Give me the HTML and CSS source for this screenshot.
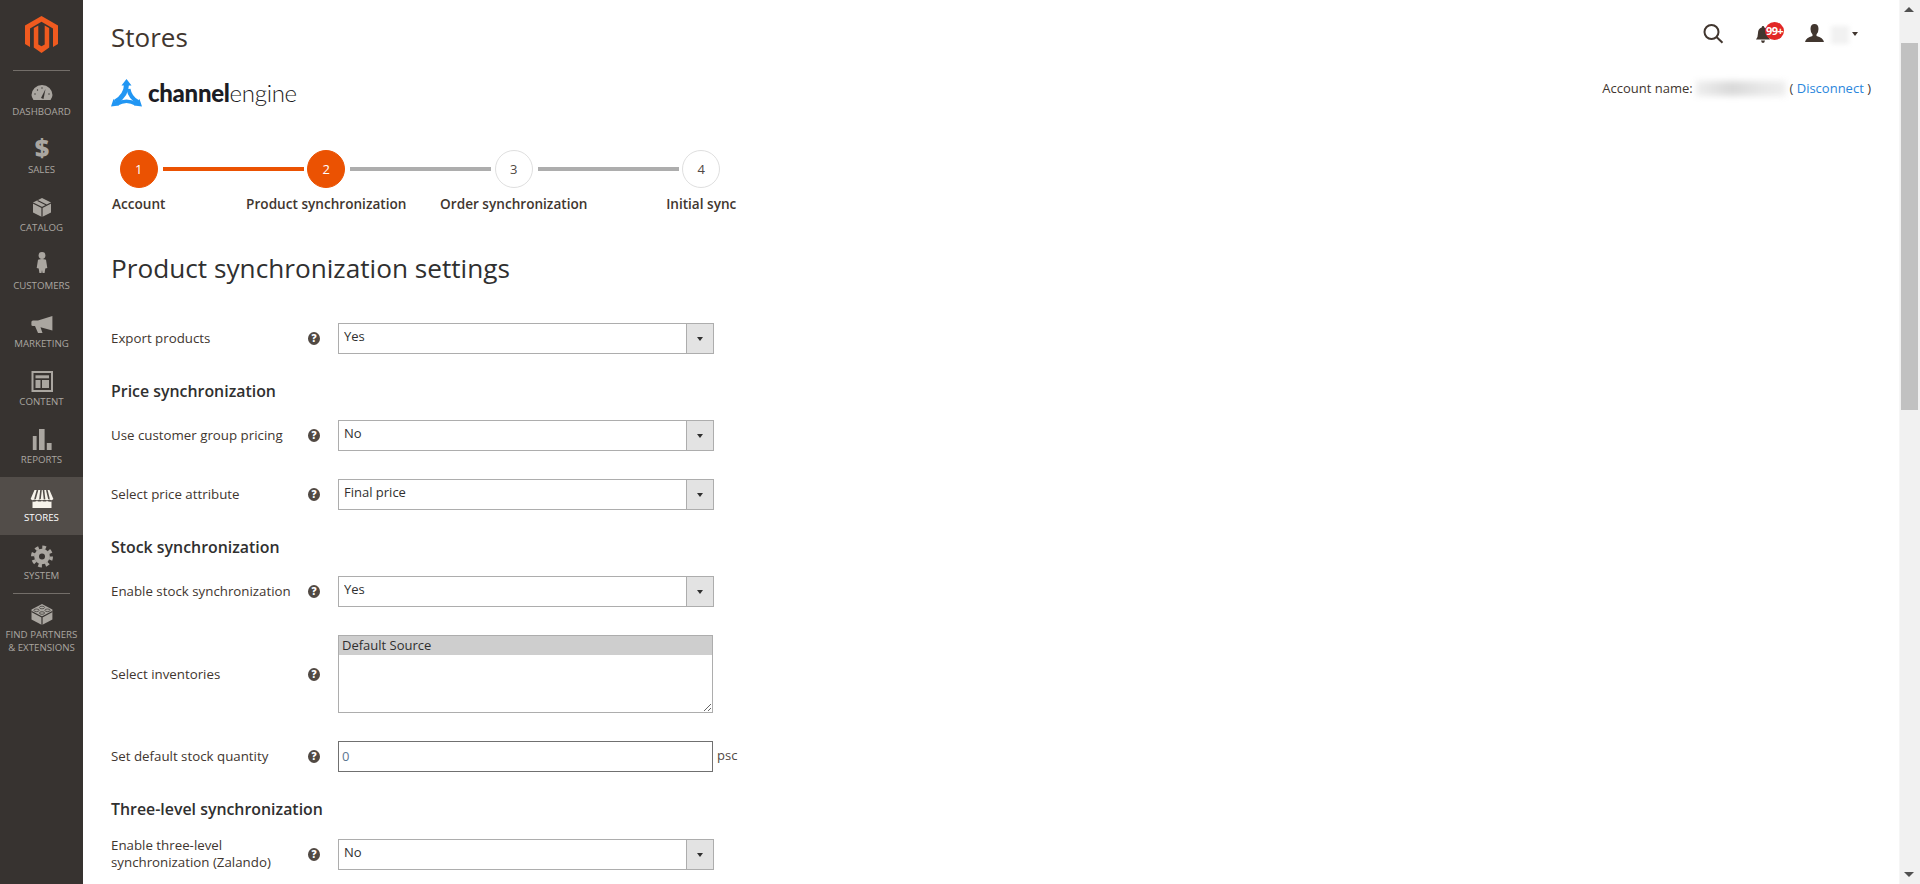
FILE: index.html
```html
<!DOCTYPE html>
<html lang="en">
<head>
    <meta charset="UTF-8">
    <title>Stores</title>
    <link rel="stylesheet" href="styles.css">
</head>
<body>
    <nav class="sidebar">
        <div class="sidebar-logo">
            <svg width="33" height="37" viewBox="0 0 33 37" fill="#ef5a1f">
                <path d="M16.5 0 L33 9.5 V28 L28 31 V12.5 L16.5 5.8 L5 12.5 V31 L0 28 V9.5 Z"/>
                <path d="M8.8 12 L13.3 9.4 V28.5 L16.5 30.2 L19.7 28.5 V9.4 L24.2 12 V31.5 L16.5 37 L8.8 31.5 Z"/>
            </svg>
        </div>
        <a class="nav-item">
            <svg class="nav-icon" viewBox="0 0 28 28">
                <path d="M5.5 23 Q3.5 20 3.5 18 A10.5 10 0 0 1 24.5 18 Q24.5 20 22.5 23 Z"/>
                <path class="cut" d="M13 21 L17.5 12 L15.5 22 Z"/>
                <g class="cut"><circle cx="7" cy="17" r=".7"/><circle cx="9.5" cy="13" r=".7"/><circle cx="14" cy="11" r=".7"/><circle cx="21" cy="17" r=".7"/></g>
            </svg>
            <span>Dashboard</span>
        </a>
        <a class="nav-item">
            <svg class="nav-icon" viewBox="0 0 28 28"><text x="14" y="22" text-anchor="middle" class="dollar">$</text></svg>
            <span>Sales</span>
        </a>
        <a class="nav-item">
            <svg class="nav-icon" viewBox="0 0 28 28">
                <path d="M14 5 L23 9.5 V19.5 L14 24 L5 19.5 V9.5 Z"/>
                <path class="cut-line" d="M5 10 L14 14.5 L23 10 M14 14.5 V24 M9.5 7.5 L18.5 12"/>
            </svg>
            <span>Catalog</span>
        </a>
        <a class="nav-item">
            <svg class="nav-icon" viewBox="0 0 28 28">
                <circle cx="14" cy="4.5" r="3.4"/>
                <path d="M10 8.8 Q14 7.4 18 8.8 L19.3 17 L17.3 17.5 L16.6 22 H14.5 L14 19 L13.5 22 H11.4 L10.7 17.5 L8.7 17 Z"/>
            </svg>
            <span>Customers</span>
        </a>
        <a class="nav-item">
            <svg class="nav-icon" viewBox="0 0 28 28">
                <path d="M24.4 7 L10 11.5 H5 Q3.4 11.5 3.4 13 V16 Q3.4 17 5 17 H7 L10 24 H14.5 L12.5 18.3 L24.4 21.5 Z"/>
            </svg>
            <span>Marketing</span>
        </a>
        <a class="nav-item">
            <svg class="nav-icon" viewBox="0 0 28 28">
                <rect class="frame" x="4.5" y="5" width="19.5" height="19"/>
                <rect x="7.5" y="8.3" width="13.5" height="3"/>
                <rect x="7.5" y="13" width="5" height="8"/>
                <rect x="14" y="13" width="7" height="8"/>
            </svg>
            <span>Content</span>
        </a>
        <a class="nav-item">
            <svg class="nav-icon" viewBox="0 0 28 28">
                <rect x="4.8" y="11" width="3.8" height="14"/>
                <rect x="11" y="4" width="5.6" height="21"/>
                <rect x="18.8" y="18" width="4.8" height="7"/>
            </svg>
            <span>Reports</span>
        </a>
        <a class="nav-item active">
            <svg class="nav-icon" viewBox="0 0 28 28">
                <path d="M6.5 7 H21.5 L25.4 16 Q24 18 21.5 16.5 Q19 18 16.5 16.5 Q14 18 11.5 16.5 Q9 18 6.5 16.5 Q4 18 2.6 16 Z"/>
                <path class="stripe" d="M9.5 7 L7 16 M13 7 L12 16 M15.5 7 L16.5 16 M18.8 7 L21 16"/>
                <path d="M4.5 18.5 Q6.5 19 9 18 Q11.5 19 14 18 Q16.5 19 19 18 Q21.5 19 23.5 18.5 V25 H4.5 Z"/>
            </svg>
            <span>Stores</span>
        </a>
        <a class="nav-item">
            <svg class="nav-icon" viewBox="0 0 28 28">
                <circle class="teeth" cx="14" cy="15.5" r="9.2"/>
                <circle cx="14" cy="15.5" r="7.8"/>
                <circle class="cut" cx="14" cy="15.5" r="3"/>
            </svg>
            <span>System</span>
        </a>
        <a class="nav-item nav-item-split">
            <svg class="nav-icon" viewBox="0 0 28 28">
                <path d="M14 4 L24.4 9.5 V19.5 L14 25 L3.5 19.5 V9.5 Z"/>
                <path class="cut-line" d="M3.5 11.5 L14 17 L24.4 11.5 M14 17 V25"/>
                <g class="cut-line thin"><ellipse cx="14" cy="7.5" rx="2.6" ry="1.3"/><ellipse cx="8.5" cy="10.3" rx="2.6" ry="1.3"/><ellipse cx="19.5" cy="10.3" rx="2.6" ry="1.3"/><ellipse cx="14" cy="13" rx="2.6" ry="1.3"/></g>
            </svg>
            <span>Find Partners<br>&amp; Extensions</span>
        </a>
    </nav>

    <main class="main">
        <header class="page-header">
            <h1>Stores</h1>
            <div class="actions">
                <svg class="search-icon" width="22" height="20" viewBox="0 0 22 20">
                    <circle cx="8.5" cy="8" r="7"/>
                    <path d="M13.5 13 L19.5 18.8"/>
                </svg>
                <div class="bell">
                    <svg width="14" height="17" viewBox="0 0 14 17">
                        <path d="M7 0 Q8.3 0 8.3 1.4 Q12 2.5 12 7 Q12 11 14 13.5 H0 Q2 11 2 7 Q2 2.5 5.7 1.4 Q5.7 0 7 0 Z M5 14.5 H9 Q8.5 17 7 17 Q5.5 17 5 14.5 Z"/>
                    </svg>
                    <span class="badge">99+</span>
                </div>
                <svg class="user-icon" width="19" height="18" viewBox="0 0 19 18">
                    <path d="M9.5 0 Q13.5 0 13.5 5 Q13.5 8.5 11.5 10.5 V12 Q18 13.5 19 18 H0 Q1 13.5 7.5 12 V10.5 Q5.5 8.5 5.5 5 Q5.5 0 9.5 0 Z"/>
                </svg>
                <div class="user-blur"></div>
                <div class="caret"></div>
            </div>
        </header>

        <div class="brand-row">
            <div class="brand">
                <svg width="31" height="28" viewBox="0 0 31 28">
                    <g fill="none" stroke="#2196f3">
                        <path stroke-width="5" d="M15.5 5 C15.5 13 11 19 4.5 23"/>
                        <path stroke-width="4" d="M17.5 10 C18.5 16 21.5 20 27 23"/>
                        <path stroke-width="3.5" d="M6 25 C12 21.5 19 21.5 25 25"/>
                    </g>
                    <path fill="#2196f3" d="M15.5 0 L20.5 6.5 H10.5 Z M0 27.5 L2.5 20 L8 26.5 Z M31 27.5 L28.5 20 L23 26.5 Z"/>
                </svg>
                <span class="brand-name"><b>channel</b>engine</span>
            </div>
            <div class="account">Account name: <span class="account-blur"></span> ( <a class="link">Disconnect</a> )</div>
        </div>

        <ol class="stepper">
            <li class="step done"><span class="step-dot">1</span><span class="step-label">Account</span></li>
            <li class="step current"><span class="step-dot">2</span><span class="step-label">Product synchronization</span></li>
            <li class="step"><span class="step-dot">3</span><span class="step-label">Order synchronization</span></li>
            <li class="step"><span class="step-dot">4</span><span class="step-label">Initial sync</span></li>
        </ol>

        <h2 class="settings-title">Product synchronization settings</h2>

        <form class="settings">
            <div class="field first">
                <label class="field-label">Export products</label>
                <span class="help">?</span>
                <div class="select-wrap"><select><option>Yes</option><option>No</option></select></div>
            </div>

            <h3 class="section-title">Price synchronization</h3>
            <div class="field under-title">
                <label class="field-label">Use customer group pricing</label>
                <span class="help">?</span>
                <div class="select-wrap"><select><option>No</option><option>Yes</option></select></div>
            </div>
            <div class="field">
                <label class="field-label">Select price attribute</label>
                <span class="help">?</span>
                <div class="select-wrap"><select><option>Final price</option></select></div>
            </div>

            <h3 class="section-title">Stock synchronization</h3>
            <div class="field under-title">
                <label class="field-label">Enable stock synchronization</label>
                <span class="help">?</span>
                <div class="select-wrap"><select><option>Yes</option><option>No</option></select></div>
            </div>
            <div class="field">
                <label class="field-label">Select inventories</label>
                <span class="help">?</span>
                <select class="multi" multiple size="4"><option selected>Default Source</option></select>
            </div>
            <div class="field">
                <label class="field-label">Set default stock quantity</label>
                <span class="help">?</span>
                <input class="qty" type="text" value="0">
                <span class="unit">psc</span>
            </div>

            <h3 class="section-title">Three-level synchronization</h3>
            <div class="field under-title">
                <label class="field-label">Enable three-level synchronization (Zalando)</label>
                <span class="help">?</span>
                <div class="select-wrap"><select><option>No</option><option>Yes</option></select></div>
            </div>
        </form>
    </main>

    <div class="scrollbar">
        <span class="scroll-up"></span>
        <span class="scroll-thumb"></span>
        <span class="scroll-down"></span>
    </div>
</body>
</html>
```

FILE: styles.css
```css
* {
    margin: 0;
    padding: 0;
    box-sizing: border-box;
}

body {
    font-family: 'Open Sans', 'Noto Sans', sans-serif;
    font-size: 13px;
    color: #303030;
    background: #fff;
    height: 884px;
    overflow: hidden;
    display: flex;
}

/* sidebar */
.sidebar {
    width: 83px;
    flex: none;
    background: #373330;
    display: flex;
    flex-direction: column;
    align-items: stretch;
}

.sidebar-logo {
    height: 71px;
    padding-top: 16px;
    display: flex;
    justify-content: center;
    position: relative;
}

.sidebar-logo::after,
.nav-item-split::before {
    content: "";
    position: absolute;
    left: 13px;
    right: 13px;
    height: 1px;
    background: #736e69;
}

.sidebar-logo::after {
    bottom: 0;
}

.nav-item {
    height: 58px;
    padding-top: 6px;
    display: flex;
    flex-direction: column;
    align-items: center;
    color: #aaa6a0;
    fill: #aaa6a0;
    font-size: 9.7px;
    line-height: 13px;
    text-transform: uppercase;
    text-align: center;
    position: relative;
}

.nav-item.active {
    background: #524d49;
    color: #fff;
    fill: #f7f3eb;
}

.nav-item-split {
    height: 70px;
    margin-top: 1px;
}

.nav-item-split::before {
    top: -1px;
}

.nav-icon {
    width: 28px;
    height: 28px;
    display: block;
    flex: none;
    overflow: visible;
}

.nav-icon .cut {
    fill: #373330;
}

.nav-icon .cut-line {
    fill: none;
    stroke: #373330;
    stroke-width: 1.2;
}

.nav-icon .cut-line.thin {
    stroke-width: .7;
}

.nav-icon .stripe {
    fill: none;
    stroke: #524d49;
    stroke-width: 1.6;
}

.nav-icon .frame {
    fill: none;
    stroke: #aaa6a0;
    stroke-width: 2;
}

.nav-icon .teeth {
    fill: none;
    stroke: #aaa6a0;
    stroke-width: 3.6;
    stroke-dasharray: 3.6 3.63;
}

.nav-icon .dollar {
    font-family: 'Open Sans', sans-serif;
    font-weight: 800;
    font-size: 25px;
}

/* main */
.main {
    flex: 1;
    min-width: 0;
    padding: 0 28px 0 28px;
    overflow: hidden;
}

.page-header {
    height: 79px;
    display: flex;
    justify-content: space-between;
    align-items: flex-start;
}

.page-header h1 {
    font-size: 26px;
    font-weight: 400;
    line-height: 38px;
    margin-top: 18px;
    color: #41362f;
}

.actions {
    display: flex;
    align-items: center;
    height: 20px;
    margin-top: 23px;
    margin-right: 13px;
}

.search-icon {
    fill: none;
    stroke: #41362f;
    stroke-width: 2;
    margin-top: 2px;
}

.bell {
    position: relative;
    width: 14px;
    height: 17px;
    margin-left: 31px;
    margin-top: 3px;
    fill: #41362f;
}

.badge {
    position: absolute;
    left: 9px;
    top: -4px;
    width: 19px;
    height: 18px;
    border-radius: 50%;
    background: #e22626;
    color: #fff;
    font-size: 11px;
    font-weight: 700;
    line-height: 18px;
    letter-spacing: -.6px;
    text-align: center;
}

.user-icon {
    margin-left: 35px;
    fill: #41362f;
}

.user-blur {
    width: 18px;
    height: 18px;
    margin-left: 7px;
    margin-top: 4px;
    background: #f1f1f1;
    filter: blur(2px);
}

.caret {
    width: 0;
    height: 0;
    margin-left: 3px;
    margin-top: 2px;
    border: 3px solid transparent;
    border-top: 4px solid #41362f;
    border-bottom: 0;
}

.brand-row {
    display: flex;
    justify-content: space-between;
    align-items: flex-start;
    height: 28px;
}

.brand {
    display: flex;
    align-items: center;
    gap: 6px;
}

.brand-name {
    font-family: 'Lato', sans-serif;
    font-size: 24px;
    line-height: 28px;
    font-weight: 300;
    color: #1c1c24;
    letter-spacing: -.3px;
}

.brand-name b {
    font-weight: 900;
}

.account {
    font-size: 13px;
    line-height: 18px;
    color: #41362f;
    white-space: nowrap;
}

.account-blur {
    display: inline-block;
    vertical-align: top;
    width: 90px;
    height: 15px;
    margin-top: 2px;
    background: linear-gradient(90deg, #eee, #d9d9d9 40%, #e6e6e6 70%, #eee);
    filter: blur(3px);
}

.link {
    color: #2a86dc;
}

/* steps */
.stepper {
    list-style: none;
    display: grid;
    grid-template-columns: repeat(4, 187.5px);
    margin: 43px 0 0 -66px;
}

.step {
    display: flex;
    flex-direction: column;
    align-items: center;
    position: relative;
}

.step:not(:last-child)::after {
    content: "";
    position: absolute;
    left: calc(50% + 24px);
    top: 17px;
    width: 141px;
    height: 4px;
    background: #adadad;
}

.step.done::after {
    background: #eb5202;
}

.step-dot {
    width: 38px;
    height: 38px;
    border-radius: 50%;
    border: 1px solid #dfdfdf;
    background: #fff;
    color: #514943;
    line-height: 36px;
    text-align: center;
    font-size: 13px;
}

.done .step-dot,
.current .step-dot {
    background: #eb5202;
    border-color: #eb5202;
    color: #fff;
}

.step-label {
    margin-top: 6px;
    font-size: 13.6px;
    font-weight: 600;
    line-height: 20px;
    color: #41362f;
    white-space: nowrap;
}

.settings-title {
    margin-top: 36px;
    font-size: 26.2px;
    font-weight: 400;
    line-height: 36px;
    color: #303030;
}

/* form */
.field {
    display: flex;
    align-items: center;
    margin-top: 28px;
}

.field.first {
    margin-top: 37px;
}

.field.under-title {
    margin-top: 18px;
}

.field.under-title:last-child {
    margin-top: 17px;
}

.field-label {
    width: 193px;
    flex: none;
    font-size: 13.3px;
    font-weight: 500;
    line-height: 17px;
    color: #41362f;
}

.help {
    width: 12px;
    height: 13px;
    margin: 0 18px 0 4px;
    flex: none;
    border-radius: 50%;
    background: #514943;
    color: #fff;
    font-size: 10px;
    font-weight: 800;
    line-height: 13px;
    text-align: center;
}

.section-title {
    margin-top: 26px;
    font-size: 15.9px;
    font-weight: 600;
    line-height: 22px;
    color: #303030;
}

.select-wrap {
    width: 376px;
    height: 31px;
    position: relative;
}

.select-wrap::after {
    content: "";
    position: absolute;
    right: 11px;
    top: 14px;
    border: 3px solid transparent;
    border-top: 4px solid #303030;
    border-bottom: 0;
}

.select-wrap select {
    width: 100%;
    height: 100%;
    appearance: none;
    border: 1px solid #adadad;
    border-radius: 0;
    padding: 0 32px 5px 5px;
    font: inherit;
    color: #303030;
    background: linear-gradient(90deg, #adadad 1px, #e3e3e3 1px) right top / 27px 100% no-repeat #fff;
}

.multi {
    width: 375px;
    height: 78px;
    border: 1px solid #adadad;
    border-radius: 0;
    font: inherit;
    color: #303030;
    overflow: auto;
    resize: both;
    background: #fff;
}

.multi option {
    padding: 0 3px 1px;
    line-height: 18px;
    min-height: 19px;
}

.multi option:checked {
    background: #cecece linear-gradient(#cecece, #cecece);
    color: #303030;
}

.qty {
    width: 375px;
    height: 31px;
    border: 1px solid #707070;
    border-radius: 0;
    padding: 0 3px 2px;
    font: inherit;
    color: #5c7690;
    outline: none;
}

.unit {
    margin-left: 4px;
    color: #514943;
    margin-top: -4px;
}

/* fake window scrollbar */
.scrollbar {
    width: 21px;
    flex: none;
    background: #f1f1f1;
    border-left: 1px solid #f6f6f6;
    position: relative;
}

.scroll-thumb {
    position: absolute;
    left: 1px;
    right: 2px;
    top: 43px;
    height: 367px;
    background: #c1c1c1;
}

.scroll-up,
.scroll-down {
    position: absolute;
    left: 4px;
    border: 5px solid transparent;
}

.scroll-up {
    top: 7px;
    border-bottom-color: #505050;
    border-top: 0;
}

.scroll-down {
    bottom: 7px;
    border-top-color: #505050;
    border-bottom: 0;
}
```
